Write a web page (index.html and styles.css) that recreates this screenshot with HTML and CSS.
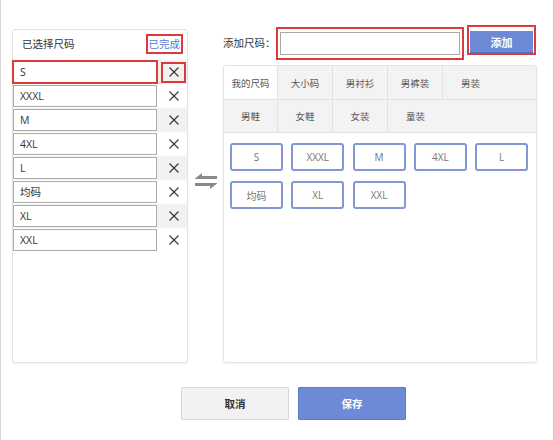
FILE: index.html
```html
<!DOCTYPE html>
<html lang="zh-CN">
<head>
<meta charset="utf-8">
<title>尺码</title>
<link rel="stylesheet" href="styles.css">
</head>
<body>
<div class="page">
  <div class="main">
    <section class="picked">
      <div class="picked-head">
        <span class="picked-title">已选择尺码</span>
        <span class="done">已完成</span>
      </div>
      <ul class="rows">
        <li class="row"><span class="size-box is-hl">S</span><span class="del is-hl"><svg viewBox="0 0 10 10"><path d="M0.5 0.5L9.5 9.5M9.5 0.5L0.5 9.5"/></svg></span></li>
        <li class="row"><span class="size-box">XXXL</span><span class="del"><svg viewBox="0 0 10 10"><path d="M0.5 0.5L9.5 9.5M9.5 0.5L0.5 9.5"/></svg></span></li>
        <li class="row"><span class="size-box">M</span><span class="del"><svg viewBox="0 0 10 10"><path d="M0.5 0.5L9.5 9.5M9.5 0.5L0.5 9.5"/></svg></span></li>
        <li class="row"><span class="size-box">4XL</span><span class="del"><svg viewBox="0 0 10 10"><path d="M0.5 0.5L9.5 9.5M9.5 0.5L0.5 9.5"/></svg></span></li>
        <li class="row"><span class="size-box">L</span><span class="del"><svg viewBox="0 0 10 10"><path d="M0.5 0.5L9.5 9.5M9.5 0.5L0.5 9.5"/></svg></span></li>
        <li class="row"><span class="size-box">均码</span><span class="del"><svg viewBox="0 0 10 10"><path d="M0.5 0.5L9.5 9.5M9.5 0.5L0.5 9.5"/></svg></span></li>
        <li class="row"><span class="size-box">XL</span><span class="del"><svg viewBox="0 0 10 10"><path d="M0.5 0.5L9.5 9.5M9.5 0.5L0.5 9.5"/></svg></span></li>
        <li class="row"><span class="size-box">XXL</span><span class="del"><svg viewBox="0 0 10 10"><path d="M0.5 0.5L9.5 9.5M9.5 0.5L0.5 9.5"/></svg></span></li>
      </ul>
    </section>

    <div class="swap">
      <svg width="22" height="18" viewBox="0 0 22 18">
        <polygon points="0,6.5 7,1 7,4 22,4 22,7 0,7"/>
        <polygon points="22,11.5 15,17 15,14 0,14 0,11 22,11"/>
      </svg>
    </div>

    <section class="lib">
      <div class="add-row">
        <span class="add-label">添加尺码：</span>
        <span class="field-hl"><input class="add-input" type="text"></span>
        <span class="btn-hl"><button class="add-btn">添加</button></span>
      </div>
      <div class="lib-panel">
        <div class="tabs">
          <div class="tab-row">
            <span class="tab active">我的尺码</span>
            <span class="tab">大小码</span>
            <span class="tab">男衬衫</span>
            <span class="tab">男裤装</span>
            <span class="tab">男装</span>
          </div>
          <div class="tab-row">
            <span class="tab">男鞋</span>
            <span class="tab">女鞋</span>
            <span class="tab">女装</span>
            <span class="tab">童装</span>
          </div>
        </div>
        <div class="chips">
          <span class="chip">S</span>
          <span class="chip">XXXL</span>
          <span class="chip">M</span>
          <span class="chip">4XL</span>
          <span class="chip">L</span>
          <span class="chip">均码</span>
          <span class="chip">XL</span>
          <span class="chip">XXL</span>
        </div>
      </div>
    </section>
  </div>

  <div class="actions">
    <button class="btn btn-cancel">取消</button>
    <button class="btn btn-save">保存</button>
  </div>
</div>
</body>
</html>
```

FILE: styles.css
```css
* { box-sizing: border-box; }

html, body {
  margin: 0;
  padding: 0;
  background: #fff;
}

body {
  font-family: "Open Sans", "Noto Sans CJK SC", sans-serif;
  color: #333;
  font-size: 11px;
}

.page {
  width: 554px;
  height: 440px;
  border-left: 1px solid #d6d6d6;
  border-right: 1px solid #c8c8c8;
}

.main {
  display: flex;
  align-items: flex-start;
  padding: 25px 0 0 11px;
}

/* left panel */
.picked {
  width: 176px;
  height: 334px;
  margin-top: 4px;
  border: 1px solid #e4e4e4;
  border-radius: 3px;
  box-shadow: 0 1px 2px rgba(0,0,0,0.06);
  background: #fff;
}

.picked-head {
  height: 30px;
  padding: 0 4px 3px 9px;
  display: flex;
  align-items: center;
  justify-content: space-between;
}

.picked-title {
  font-size: 10.5px;
  color: #333;
}

.done {
  font-size: 10.5px;
  color: #5b79cf;
  border: 2px solid #dd3a3e;
  height: 20px;
  line-height: 16px;
  padding: 0 1px;
}

.rows {
  list-style: none;
  margin: 0;
  padding: 0;
}

.row {
  height: 24px;
  display: flex;
  align-items: center;
}

.row:nth-child(odd) {
  background: #f2f2f2;
}

.size-box {
  width: 144px;
  height: 22px;
  border: 1px solid #ababab;
  background: #fff;
  padding-left: 6px;
  line-height: 20px;
  font-size: 10.5px;
  color: #333;
}

.size-box.is-hl {
  border-color: #dd3a3e;
  outline: 1px solid #dd3a3e;
}

.del {
  width: 25px;
  height: 21px;
  margin-left: 4px;
  border: 2px solid transparent;
  display: flex;
  align-items: center;
  justify-content: center;
}

.del.is-hl {
  border-color: #dd3a3e;
}

.del svg {
  width: 10px;
  height: 10px;
  stroke: #333;
  stroke-width: 1.1;
  fill: none;
}

/* swap icon */
.swap {
  width: 35px;
  padding-top: 147px;
  display: flex;
  justify-content: center;
}

.swap svg {
  fill: #8a8a8a;
}

/* right side */
.lib {
  width: 315px;
}

.add-row {
  height: 36px;
  display: flex;
  align-items: flex-start;
}

.add-label {
  width: 53px;
  line-height: 36px;
  font-size: 10.5px;
  color: #333;
  white-space: nowrap;
}

.field-hl {
  margin-top: 2px;
  border: 2px solid #dd3a3e;
  padding: 3px 2px;
  display: block;
}

.add-input {
  display: block;
  width: 180px;
  height: 23px;
  margin: 0;
  border: 1px solid #a9a9a9;
  background: #fff;
  padding: 0 4px;
  outline: none;
}

.btn-hl {
  margin-left: 3px;
  border: 2px solid #dd3a3e;
  padding: 4px 1px 0;
  display: block;
  height: 30px;
}

.add-btn {
  display: block;
  width: 63px;
  height: 22px;
  margin: 0;
  padding: 0;
  border: 0;
  border-bottom: 1px solid #5471bf;
  background: #6c8ad6;
  color: #fff;
  font-family: "Noto Sans CJK SC", sans-serif;
  font-weight: bold;
  font-size: 11px;
}

.lib-panel {
  margin-top: 4px;
  width: 314px;
  height: 298px;
  border: 1px solid #e4e4e4;
  border-radius: 3px;
  box-shadow: 0 1px 2px rgba(0,0,0,0.06);
  background: #fff;
  overflow: hidden;
}

.tabs {
  background: #f3f3f3;
  border-bottom: 1px solid #e2e2e2;
}

.tab-row {
  display: flex;
  height: 33px;
}

.tab-row + .tab-row {
  border-top: 1px solid #e2e2e2;
  height: 33px;
}

.tab {
  width: 55px;
  border-right: 1px solid #e2e2e2;
  display: flex;
  align-items: center;
  justify-content: center;
  font-size: 9.5px;
  color: #555;
}

.tab:first-child {
  width: 54px;
}

.tab:last-child {
  border-right: 0;
}

.tab.active {
  background: #fff;
}

.chips {
  display: grid;
  grid-template-columns: repeat(5, 53px);
  column-gap: 8.3px;
  row-gap: 10px;
  padding: 10px 0 0 6px;
}

.chip {
  height: 28px;
  border: 2px solid #8198d0;
  border-radius: 3px;
  display: flex;
  align-items: center;
  justify-content: center;
  font-size: 10px;
  color: #777;
}

/* bottom actions */
.actions {
  margin-top: 24px;
  padding-left: 33px;
  display: flex;
  justify-content: center;
  gap: 9px;
}

.btn {
  width: 108px;
  height: 33px;
  margin: 0;
  padding: 0;
  font-family: "Noto Sans CJK SC", sans-serif;
  font-size: 10.5px;
  font-weight: bold;
  border-radius: 1px;
}

.btn-cancel {
  background: #f2f2f2;
  border: 1px solid #d9d9d9;
  color: #333;
}

.btn-save {
  background: #6c8ad6;
  border: 1px solid #5d7ac6;
  color: #fff;
}
```
